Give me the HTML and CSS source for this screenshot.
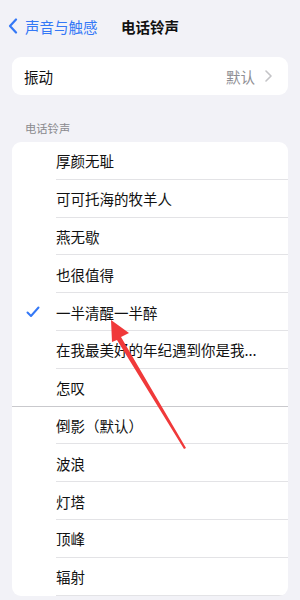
FILE: index.html
```html
<!DOCTYPE html>
<html lang="zh-CN">
<head>
    <meta charset="UTF-8">
    <meta name="viewport" content="width=device-width, initial-scale=1.0">
    <title>电话铃声</title>
    <link rel="stylesheet" href="styles.css">
</head>
<body>
    <div class="screen">
        <div class="nav">
            <a class="back" href="#">
                <svg class="back-icon" width="10" height="16" viewBox="0 0 10 16">
                    <path d="M8 1.5 L2 8 L8 14.5" fill="none" stroke="#3478f6" stroke-width="2.2" stroke-linecap="round" stroke-linejoin="round"/>
                </svg>
                <span>声音与触感</span>
            </a>
            <div class="title">电话铃声</div>
            <div></div>
        </div>

        <div class="card">
            <div class="setting-row">
                <span class="setting-label">振动</span>
                <span class="setting-value">默认</span>
                <svg class="chevron" width="7" height="12" viewBox="0 0 7 12">
                    <path d="M1 1 L6 6 L1 11" fill="none" stroke="#c4c4c7" stroke-width="1.6" stroke-linecap="round" stroke-linejoin="round"/>
                </svg>
            </div>
        </div>

        <div class="section-header">电话铃声</div>

        <div class="card list">
            <div class="row"><span class="mark"></span><span class="name">厚颜无耻</span></div>
            <div class="row"><span class="mark"></span><span class="name">可可托海的牧羊人</span></div>
            <div class="row"><span class="mark"></span><span class="name">燕无歇</span></div>
            <div class="row"><span class="mark"></span><span class="name">也很值得</span></div>
            <div class="row selected">
                <span class="mark">
                    <svg width="14" height="12" viewBox="0 0 14 12">
                        <path d="M1.5 6.5 L5 10 L12.5 1.5" fill="none" stroke="#3478f6" stroke-width="2" stroke-linecap="round" stroke-linejoin="round"/>
                    </svg>
                </span>
                <span class="name">一半清醒一半醉</span>
            </div>
            <div class="row"><span class="mark"></span><span class="name">在我最美好的年纪遇到你是我...</span></div>
            <div class="row group-end"><span class="mark"></span><span class="name">怎叹</span></div>
            <div class="row"><span class="mark"></span><span class="name">倒影（默认）</span></div>
            <div class="row"><span class="mark"></span><span class="name">波浪</span></div>
            <div class="row"><span class="mark"></span><span class="name">灯塔</span></div>
            <div class="row"><span class="mark"></span><span class="name">顶峰</span></div>
            <div class="row"><span class="mark"></span><span class="name">辐射</span></div>
        </div>

        <!-- annotation arrow drawn over the list -->
        <svg class="arrow" width="300" height="600" viewBox="0 0 300 600">
            <polygon points="111,320 129,333 121,337 186,448 184,449 117,340 112,342" fill="#f0393a"/>
        </svg>
    </div>
</body>
</html>
```

FILE: styles.css
```css
* {
    margin: 0;
    padding: 0;
    box-sizing: border-box;
}

body {
    font-family: "Noto Sans CJK SC", "Noto Sans", sans-serif;
    background: #f2f2f7;
    color: #111;
}

.screen {
    position: relative;
    width: 300px;
    height: 600px;
    overflow: hidden;
    padding: 0 12px;
}

.nav {
    display: grid;
    grid-template-columns: 1fr auto 1fr;
    align-items: center;
    height: 52px;
    margin: 0 -12px;
    padding: 0 8px;
}

.back {
    display: flex;
    align-items: center;
    gap: 7px;
    color: #3478f6;
    text-decoration: none;
    font-size: 14.5px;
    white-space: nowrap;
}

.title {
    font-size: 14.5px;
    font-weight: 700;
}

.card {
    background: #fff;
    border-radius: 9px;
    margin-top: 5px;
}

.setting-row {
    display: flex;
    align-items: center;
    height: 38px;
    padding: 0 16px 0 12px;
    font-size: 14.5px;
}

.setting-label {
    flex: 1;
}

.setting-value {
    color: #8e8e93;
    margin-right: 10px;
}

.section-header {
    font-size: 11.3px;
    color: #8a8a8e;
    line-height: 14px;
    padding: 26px 0 0 13px;
    margin-bottom: 7px;
}

.list {
    margin-top: 0;
    overflow: hidden;
}

.row {
    display: flex;
    align-items: center;
    height: 37.8px;
    font-size: 14.5px;
    position: relative;
}

.row::after {
    content: "";
    position: absolute;
    left: 44px;
    right: 0;
    bottom: 0;
    height: 1px;
    background: #e3e3e6;
}

.row.group-end::after {
    left: 0;
    background: #c9c9cd;
}

.mark {
    width: 44px;
    flex: none;
    display: flex;
    justify-content: flex-end;
    padding-right: 16px;
}

.name {
    white-space: nowrap;
    overflow: hidden;
    text-overflow: ellipsis;
    padding-right: 16px;
}

.arrow {
    position: absolute;
    left: 0;
    top: 0;
    pointer-events: none;
}
```
